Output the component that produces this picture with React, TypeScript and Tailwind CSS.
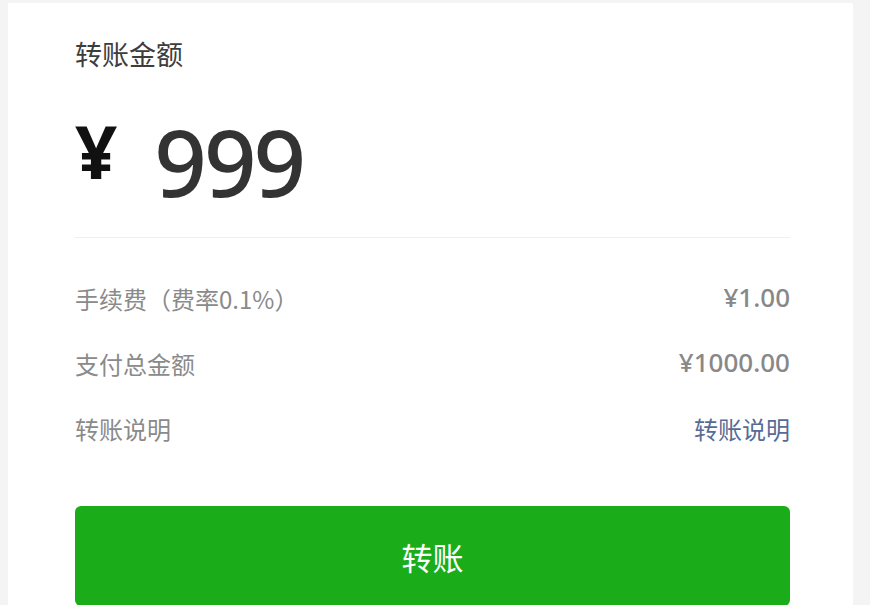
import React from "react";

function Row({ label, value, link }: { label: string; value: string; link?: boolean }) {
  return (
    <div className="flex h-[65px] items-center justify-between">
      <span className="font-['Noto_Sans_CJK_SC','Noto_Sans',sans-serif] text-[24px] leading-[24px] text-[#8a8a8a]">
        {label}
      </span>
      {link ? (
        <span className="font-['Noto_Sans_CJK_SC','Noto_Sans',sans-serif] text-[24px] leading-[24px] text-[#576b95]">
          {value}
        </span>
      ) : (
        <span className="-mt-[3px] font-['Noto_Sans','Noto_Sans_CJK_SC',sans-serif] text-[26px] font-medium leading-[26px] text-[#888888]">
          {value}
        </span>
      )}
    </div>
  );
}

export default function App() {
  return (
    <div className="h-[605px] w-[870px] overflow-hidden bg-[#f4f4f4] pt-[3px]">
      <div className="ml-[8px] h-[700px] w-[845px] bg-white pl-[67px] pr-[63px] pt-[37px]">
        <div className="font-['Noto_Sans_CJK_SC','Noto_Sans',sans-serif] text-[27px] leading-[27px] text-[#3d3d3d]">
          转账金额
        </div>
        <div className="mt-[47px] flex items-start">
          <span className="font-['Noto_Sans','Noto_Sans_CJK_SC',sans-serif] text-[74px] font-bold leading-none text-[#111]">
            ¥
          </span>
          <span className="ml-[37px] mt-[2px] font-['Noto_Sans','Noto_Sans_CJK_SC',sans-serif] text-[92px] font-medium leading-none tracking-[-3px] text-[#333]">
            999
          </span>
        </div>
        <div className="mt-[29px] h-px bg-[#efefef]" />
        <div className="mt-[28px]">
          <Row label="手续费（费率0.1%）" value="¥1.00" />
          <Row label="支付总金额" value="¥1000.00" />
          <Row label="转账说明" value="转账说明" link />
        </div>
        <button className="mt-[45px] flex h-[100px] w-full items-center justify-center rounded-[6px] bg-[#1aad19] font-['Noto_Sans_CJK_SC','Noto_Sans',sans-serif] text-[31px] leading-none text-white">
          转账
        </button>
      </div>
    </div>
  );
}
